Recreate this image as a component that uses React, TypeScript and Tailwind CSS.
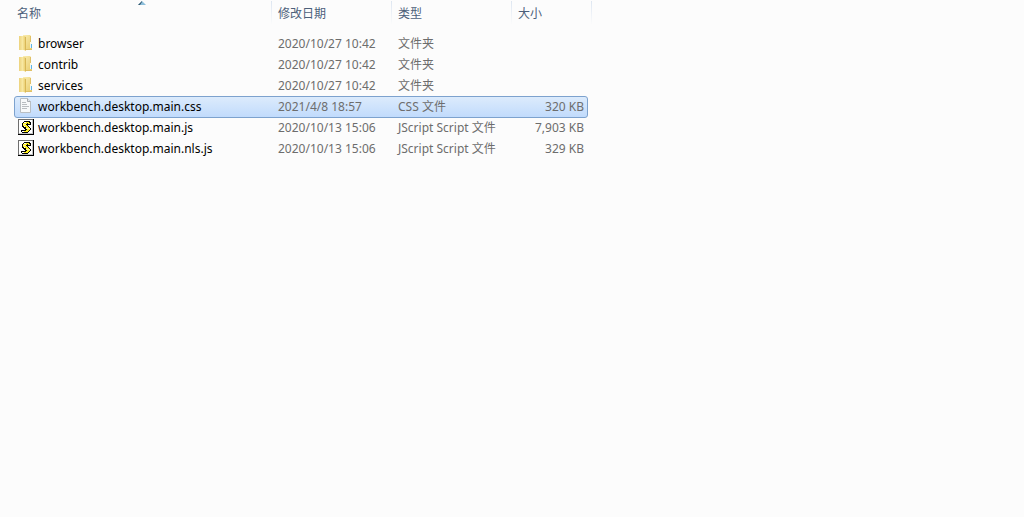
import React, { useState } from "react";

type Kind = "folder" | "css" | "js";

interface FileItem {
  name: string;
  modified: string;
  type: string;
  size: string;
  kind: Kind;
}

const files: FileItem[] = [
  { name: "browser", modified: "2020/10/27 10:42", type: "文件夹", size: "", kind: "folder" },
  { name: "contrib", modified: "2020/10/27 10:42", type: "文件夹", size: "", kind: "folder" },
  { name: "services", modified: "2020/10/27 10:42", type: "文件夹", size: "", kind: "folder" },
  { name: "workbench.desktop.main.css", modified: "2021/4/8 18:57", type: "CSS 文件", size: "320 KB", kind: "css" },
  { name: "workbench.desktop.main.js", modified: "2020/10/13 15:06", type: "JScript Script 文件", size: "7,903 KB", kind: "js" },
  { name: "workbench.desktop.main.nls.js", modified: "2020/10/13 15:06", type: "JScript Script 文件", size: "329 KB", kind: "js" },
];

const FolderIcon = () => (
  <svg width="16" height="16" viewBox="0 0 16 16" className="mt-px shrink-0" aria-hidden="true">
    <defs>
      <linearGradient id="folderLeft" x1="0" y1="0" x2="1" y2="0">
        <stop offset="0" stopColor="#ecd27c" />
        <stop offset="0.5" stopColor="#f8e8a2" />
        <stop offset="1" stopColor="#e6c764" />
      </linearGradient>
      <linearGradient id="folderRight" x1="0" y1="0" x2="1" y2="1">
        <stop offset="0" stopColor="#faeeb4" />
        <stop offset="1" stopColor="#e8ca68" />
      </linearGradient>
    </defs>
    <path d="M5 0h7l1 1v6h1v8H5z" fill="url(#folderRight)" />
    <path d="M12.500 1v6M6 14.500h8" stroke="#e0c067" />
    <path d="M1 1h5l2 1v14l-2-1H1z" fill="url(#folderLeft)" />
    <path d="M7.500 2v13" stroke="#d8b756" />
    <path d="M12 7h2v2h-2z" fill="#fdf9e6" />
    <path d="M12 9h1v4h-1z" fill="#eef6fb" />
    <path d="M13 9h1v4h-1z" fill="#5fb4e4" />
  </svg>
);

const DocumentIcon = () => (
  <svg width="16" height="16" viewBox="0 0 16 16" className="mt-px shrink-0" aria-hidden="true">
    <path d="M2.500.5h7l3 3v11h-10z" fill="#f7f9fa" stroke="#b9bec2" />
    <path d="M9.500.5v3h3" fill="#e3e6ea" stroke="#a8adb2" />
    <path d="M4 4.500h4M4 6.500h5M4 8.500h7M4 10.500h5" stroke="#b9bdc1" />
  </svg>
);

const ScriptIcon = () => (
  <svg width="16" height="16" viewBox="0 0 16 16" className="mt-px shrink-0" shapeRendering="crispEdges" aria-hidden="true">
    <path d="M0 0h16v16H0z" fill="#6f6f6f" />
    <path d="M15 0h1v16H0v-1h15z" fill="#000" />
    <path d="M1 1h14v14H1z" fill="#fff" />
    <path d="M14 1h1v14H1v-1h13z" fill="#c6c6c6" />
    <path d="M6 2h6v1h1v3h-3v1h1v1h1v1h1v2h-1v1h-1v1h-1v1H4v-1H3v-2h4v-1H6V9H5V8H4V4h1V3h1z" fill="#000" />
    <path d="M6 3h5v1H6zM5 4h4v1H5zM5 6h4v1H5zM6 7h4v1H6zM8 8h3v1H8zM9 10h3v1H9zM8 11h3v1H8zM4 12h6v1H4z" fill="#fff01e" />
    <path d="M5 5h3v1H5zM8 9h4v1H8z" fill="#fff7a0" />
    <path d="M10 4h2v1h-2z" fill="#fff01e" />
    <path d="M6 3h2v1H6zM6 7h1v1H6zM4 12h2v1H4z" fill="#fff" />
  </svg>
);

const FileIcon = ({ kind }: { kind: Kind }) => {
  if (kind === "folder") return <FolderIcon />;
  if (kind === "css") return <DocumentIcon />;
  return <ScriptIcon />;
};

const HeaderCell = ({ label, last, sorted }: { label: string; last?: boolean; sorted?: boolean }) => (
  <th scope="col" className="relative h-8 p-0 text-left align-top font-normal">
    <button type="button" className={`h-6 w-full pt-0.5 text-left text-[#4c607a] ${sorted ? "pl-0.5" : "pl-1.5"}`}>
      {label}
    </button>
    {sorted && (
      <svg width="8" height="4" viewBox="0 0 8 4" className="absolute left-1/2 top-0 -ml-1.5" aria-hidden="true">
        <path d="M0 4 4 0l4 4z" fill="#8dbfdb" />
        <path d="M0 4 4 0v1L2 4z" fill="#35596f" />
      </svg>
    )}
    <span
      className={`absolute top-0 h-6 w-px bg-linear-to-b from-[#dde6f1] to-[#fcfcfc] ${last ? "-right-[5px]" : "right-0"}`}
    />
  </th>
);

const App = () => {
  const [selected, setSelected] = useState("workbench.desktop.main.css");

  return (
    <main className="min-h-screen bg-[#fcfcfc] px-[15px] font-['Noto_Sans','Noto_Sans_CJK_SC',sans-serif] text-xs text-[#6d6d6d]">
      <table className="table-fixed border-separate border-spacing-x-0 border-spacing-y-px">
        <colgroup>
          <col className="w-[257px]" />
          <col className="w-[120px]" />
          <col className="w-[120px]" />
          <col className="w-[75px]" />
        </colgroup>
        <thead>
          <tr>
            <HeaderCell label="名称" sorted />
            <HeaderCell label="修改日期" />
            <HeaderCell label="类型" />
            <HeaderCell label="大小" last />
          </tr>
        </thead>
        <tbody>
          {files.map((file) => (
            <tr
              key={file.name}
              onClick={() => setSelected(file.name)}
              className={
                file.name === selected
                  ? "rounded-[2px] bg-linear-to-b from-[#dcebfc] to-[#c1dbfc] outline outline-[#7da2ce]"
                  : ""
              }
            >
              <td className="h-5 p-0 pl-[3px]">
                <div className="flex h-5 items-start gap-1 whitespace-nowrap leading-5 text-black">
                  <FileIcon kind={file.kind} />
                  {file.name}
                </div>
              </td>
              <td className="h-5 whitespace-nowrap p-0 pl-1.5">{file.modified}</td>
              <td className="h-5 whitespace-nowrap p-0 pl-1.5">{file.type}</td>
              <td className="h-5 whitespace-nowrap p-0 pr-[3px] text-right">{file.size}</td>
            </tr>
          ))}
        </tbody>
      </table>
    </main>
  );
};

export default App;
